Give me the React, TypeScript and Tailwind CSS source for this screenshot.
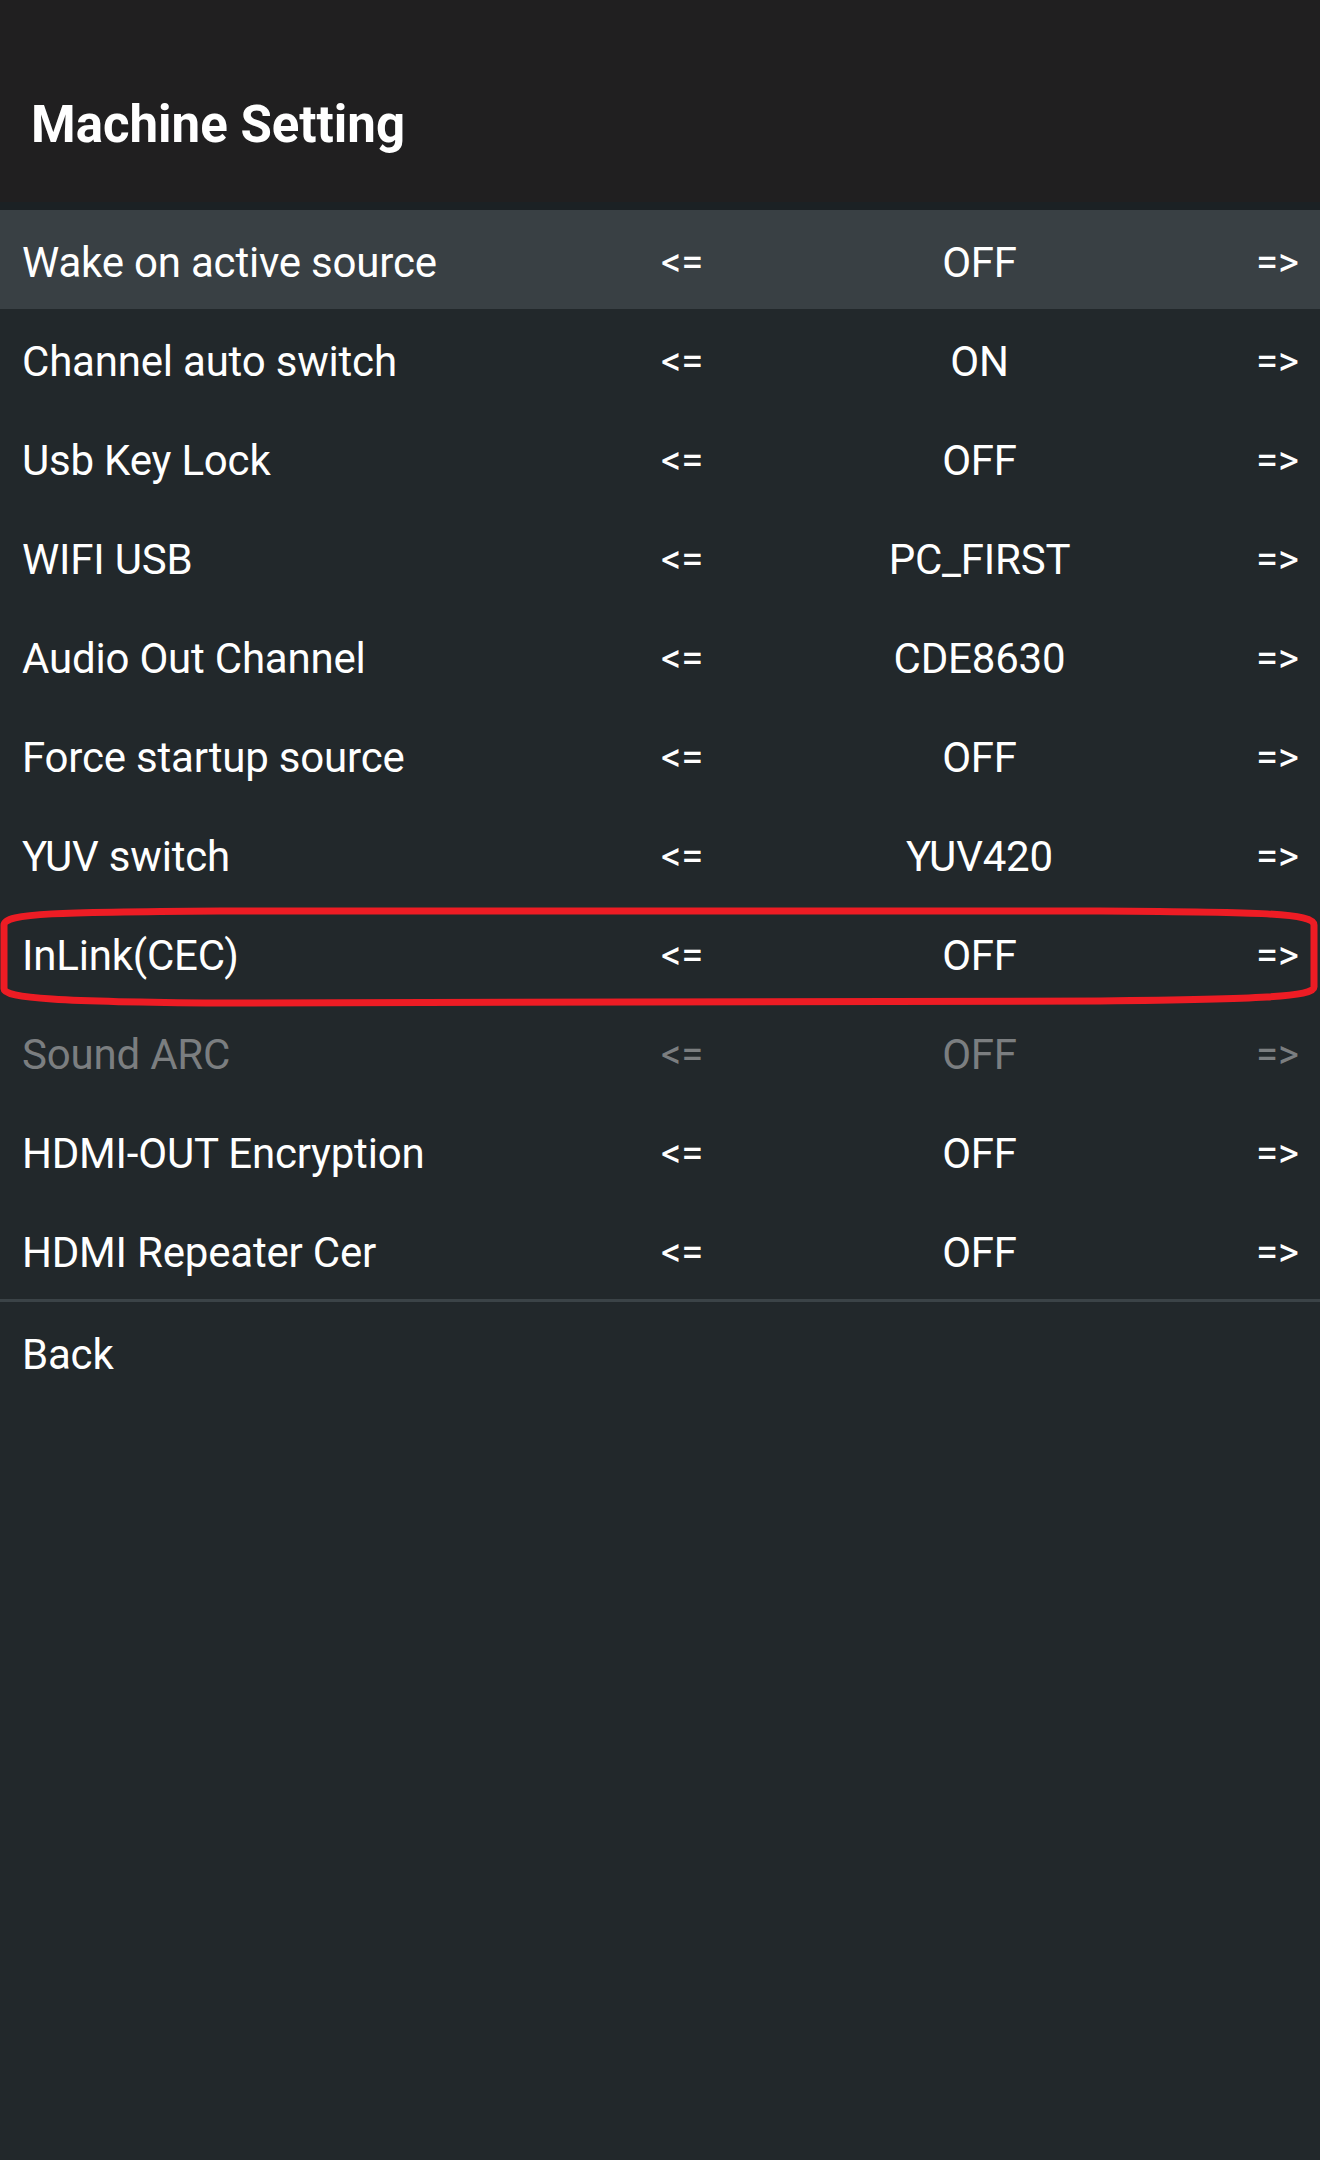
import React from "react";

type Row = { label: string; value: string; active?: boolean; disabled?: boolean; marked?: boolean };

const rows: Row[] = [
  { label: "Wake on active source", value: "OFF", active: true },
  { label: "Channel auto switch", value: "ON" },
  { label: "Usb Key Lock", value: "OFF" },
  { label: "WIFI USB", value: "PC_FIRST" },
  { label: "Audio Out Channel", value: "CDE8630" },
  { label: "Force startup source", value: "OFF" },
  { label: "YUV switch", value: "YUV420" },
  { label: "InLink(CEC)", value: "OFF", marked: true },
  { label: "Sound ARC", value: "OFF", disabled: true },
  { label: "HDMI-OUT Encryption", value: "OFF" },
  { label: "HDMI Repeater Cer", value: "OFF" },
];

function Highlight() {
  // hand-drawn red marker round the row
  return (
    <svg
      className="absolute left-0 top-0 w-[1320px] h-[110px] pointer-events-none"
      viewBox="0 0 1320 110"
      fill="none"
    >
      <path
        d="M4 22 C4 10, 60 9, 220 8 L1100 8 C1260 9, 1314 10, 1314 22 L1314 84 C1314 94, 1260 96, 1100 98 L220 100 C60 99, 4 95, 4 86 Z"
        stroke="#ed1c24"
        strokeWidth={7}
      />
    </svg>
  );
}

export default function App() {
  return (
    <div className="w-[1320px] h-[2160px] bg-[#22282b] font-['Roboto',_'Liberation_Sans',_sans-serif] text-white">
      {/* Header */}
      <div className="h-[202px] bg-[#201f20] pt-[99px] pl-[31px]">
        <h1 className="text-[51px] font-bold leading-none">Machine Setting</h1>
      </div>
      <div className="h-[8px] bg-[#1b2124]" />

      {/* Options */}
      <div>
        {rows.map((r) => (
          <div
            key={r.label}
            className={`relative h-[99px] grid grid-cols-[639px_42px_1fr_42px] items-center px-[22px] pt-[6px] text-[42px] leading-none ${
              r.active ? "bg-[#394044]" : ""
            } ${r.disabled ? "text-[#7b7e80]" : "text-white"}`}
          >
            <span className="tracking-[-0.2px]">{r.label}</span>
            <span className="text-[40px]">&lt;=</span>
            <span className="text-center tracking-[-0.2px]">{r.value}</span>
            <span className="text-right text-[40px]">=&gt;</span>
            {r.marked && <Highlight />}
          </div>
        ))}
      </div>

      <div className="h-[3px] bg-[#3b4347]" />

      <div className="h-[99px] flex items-center px-[22px] pt-[6px] text-[42px] leading-none tracking-[-0.2px]">Back</div>
    </div>
  );
}
